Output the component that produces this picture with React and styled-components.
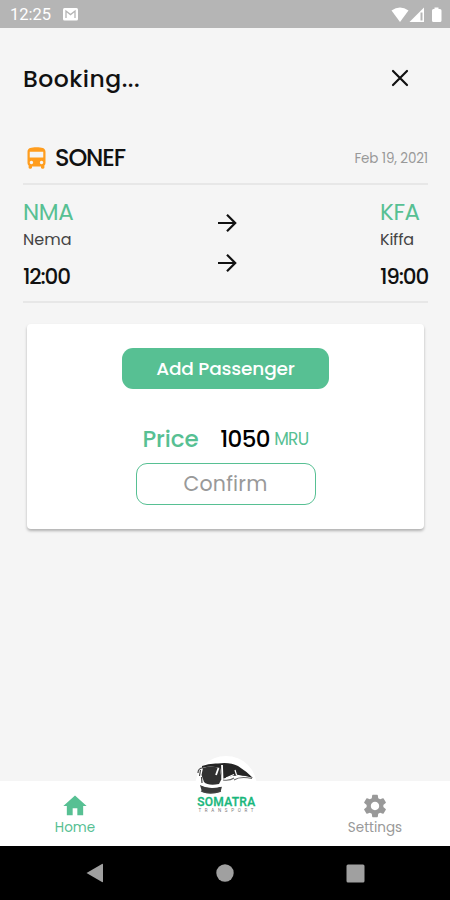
import React from 'react';
import styled, { createGlobalStyle } from 'styled-components';
import { MdDirectionsBus, MdHome, MdSettings } from 'react-icons/md';

const GlobalStyle = createGlobalStyle`
    * {
        box-sizing: border-box;
    }
    body {
        margin: 0;
        background: #f5f5f5;
        font-family: Poppins, Inter, "Open Sans", sans-serif;
    }
`;

const ArrowIcon = () => (
    <svg width="20" height="20" viewBox="0 0 20 20" fill="none" stroke="#111" strokeWidth="2.2">
        <path d="M1 10H18M10 1.8L18.2 10L10 18.2" />
    </svg>
);

const CloseIcon = () => (
    <svg width="18" height="18" viewBox="0 0 18 18" fill="none" stroke="#111" strokeWidth="2.2" strokeLinecap="round">
        <path d="M2 2L16 16M16 2L2 16" />
    </svg>
);

const MailIcon = () => (
    <svg width="15" height="13" viewBox="0 0 15 13">
        <rect width="15" height="12.5" rx="1.5" fill="#fff" />
        <path d="M3 10V3L7.5 6.6L12 3V10" fill="none" stroke="#b5b5b5" strokeWidth="1.3" />
    </svg>
);

const SignalIcons = () => (
    <svg width="52" height="16" viewBox="0 0 52 16" fill="#fff">
        <path d="M0.5 3.5Q9 -2.5 17.5 3.5L9 15Z" />
        <path d="M33 0.5V15H18.5Z" />
        <path d="M30.5 5.5V13.5" stroke="#b5b5b5" strokeWidth="2" />
        <path d="M43.5 0.5H47.5V2H49Q50.5 2 50.5 3.5V13.5Q50.5 15 49 15H42.5Q41 15 41 13.5V3.5Q41 2 42.5 2H43.5Z" />
    </svg>
);

const BusLogo = () => (
    <svg width="60" height="35" viewBox="0 0 60 35">
        {/* roof and side */}
        <path d="M6 6Q13 3 22 3.5Q34 2 42 6Q50 11 57 18Q46 14.5 36 16L26 19L24 8Q14 5 6 8Z" fill="#252525" />
        {/* windscreen */}
        <path d="M7 8Q14 5 24 8L25.5 19L23 24Q12 26 8 22L5.5 15Z" fill="#303030" />
        {/* bumper */}
        <path d="M4 25Q13 30 26 26.5L24.5 32Q14 35 6 32Z" fill="#3a3a3a" />
        <path d="M4 23.5Q13 28.5 26 25.5L29 21M26 5L26.5 19M22.500 8L20 15" fill="none" stroke="#fff" strokeWidth="1.8" />
        <path d="M7 8Q2 8 2 13M4.500 10L3.500 16M5.500 17L6 23M5 31Q14 35 25 31" fill="none" stroke="#444" strokeWidth="1.2" />
        <path d="M27 20Q34 21 38 18M38 20Q44 16 56 18.500" fill="none" stroke="#666" strokeWidth="1.1" />
        <path d="M30 18L38 14.500M39 10L40.500 15L46 16.500" fill="none" stroke="#fff" strokeWidth="1.2" />
    </svg>
);

function Stop({ code, city, time, citySpacing }) {
    return (
        <StopStyled>
            <Text size={23} color="#57c093" line={30} spacing={-0.4}>{code}</Text>
            <Text size={16} color="#444" line={26} spacing={citySpacing}>{city}</Text>
            <TimeText size={21.5} weight={500} line={30} spacing={-1.2}>{time}</TimeText>
        </StopStyled>
    );
}

function App() {
    return (
        <Screen>
            <GlobalStyle />
            <StatusBar>
                <Clock>12:25</Clock>
                <MailIcon />
                <StatusRight><SignalIcons /></StatusRight>
            </StatusBar>
            <Header>
                <Text size={23.5} weight={500} line={34} spacing={0.5}>Booking...</Text>
                <CloseButton><CloseIcon /></CloseButton>
            </Header>
            <Trip>
                <TripHeader>
                    <Company>
                        <MdDirectionsBus size={27} color="#ff9d1e" />
                        <Text size={24} weight={500} line={34} spacing={-1.1}>SONEF</Text>
                    </Company>
                    <DateText size={13.5} color="#999" line={20} spacing={-0.15}>Feb 19, 2021</DateText>
                </TripHeader>
                <Route>
                    <Stop code="NMA" city="Nema" time="12:00" />
                    <Arrows>
                        <ArrowIcon />
                        <ArrowIcon />
                    </Arrows>
                    <Stop code="KFA" city="Kiffa" time="19:00" citySpacing={-0.2} />
                </Route>
            </Trip>
            <Card>
                <AddButton>Add Passenger</AddButton>
                <Price>
                    <Text size={23} weight={500} color="#57c093" line={34} spacing={-0.1}>Price</Text>
                    <Amount size={23} weight={500} color="#000" line={34} spacing={-0.6}>1050</Amount>
                    <Text size={17} color="#57c093" line={34} spacing={-0.7}>MRU</Text>
                </Price>
                <ConfirmButton>Confirm</ConfirmButton>
            </Card>
            <TabBar>
                <Tab color="#57c093">
                    <MdHome size={28} />
                    <TabLabel>Home</TabLabel>
                </Tab>
                <LogoSlot>
                    <Logo>
                        <BusLogo />
                        <Brand>SOMATRA</Brand>
                        <Tagline>TRANSPORT</Tagline>
                    </Logo>
                </LogoSlot>
                <Tab color="#999">
                    <MdSettings size={28} />
                    <TabLabel>Settings</TabLabel>
                </Tab>
            </TabBar>
            <SystemNav>
                <svg width="18" height="20" viewBox="0 0 18 20"><path d="M0.5 10L16 1Q17 0.5 17 1.5V18.5Q17 19.5 16 19Z" fill="#a0a0a0" /></svg>
                <svg width="18" height="18" viewBox="0 0 18 18"><circle cx="9" cy="9" r="8.7" fill="#a0a0a0" /></svg>
                <svg width="19" height="19" viewBox="0 0 19 19"><rect x="0.5" y="0.5" width="18" height="18" rx="1.5" fill="#a0a0a0" /></svg>
            </SystemNav>
        </Screen>
    );
}

const Screen = styled.div`
    width: 450px;
    height: 900px;
    display: flex;
    flex-direction: column;
    background: #f5f5f5;
    overflow: hidden;
    svg {
        display: block;
        flex-shrink: 0;
    }
`;

const Text = styled.span`
    display: block;
    white-space: nowrap;
    font-size: ${({ size }) => size}px;
    font-weight: ${({ weight }) => weight || 400};
    line-height: ${({ line }) => line}px;
    letter-spacing: ${({ spacing }) => spacing || 0}px;
    color: ${({ color }) => color || '#111'};
`;

const StatusBar = styled.div`
    height: 28px;
    padding: 1px 7px 0 10px;
    display: flex;
    align-items: center;
    background: #b5b5b5;
`;

const Clock = styled.span`
    width: 53px;
    font: 400 16.5px/28px Roboto, sans-serif;
    color: #fff;
`;

const StatusRight = styled.div`
    margin-left: auto;
`;

const Header = styled.div`
    height: 102px;
    padding: 0 41px 1px 23px;
    display: flex;
    align-items: center;
    justify-content: space-between;
`;

const CloseButton = styled.div`
    padding-bottom: 2px;
`;

const Trip = styled.div`
    margin: 0 22px 0 23px;
`;

const TripHeader = styled.div`
    height: 55px;
    display: flex;
    align-items: center;
    justify-content: space-between;
    border-bottom: 2px solid #e7e7e7;
    padding-top: 3px;
`;

const Company = styled.div`
    display: flex;
    align-items: center;
    gap: 5px;
`;

const DateText = styled(Text)`
    padding-top: 1px;
`;

const Route = styled.div`
    height: 118px;
    padding-top: 12px;
    display: flex;
    justify-content: space-between;
    border-bottom: 2px solid #e7e7e7;
`;

const StopStyled = styled.div`
    width: 48px;
`;

const TimeText = styled(Text)`
    margin-top: 9px;
`;

const Arrows = styled.div`
    display: flex;
    flex-direction: column;
    gap: 20px;
    padding: 16px 0 0 2px;
`;

const Card = styled.div`
    height: 205px;
    margin: 21px 26px 0 27px;
    padding-top: 24px;
    display: flex;
    flex-direction: column;
    align-items: center;
    background: #fff;
    border-radius: 4px;
    box-shadow: 0 2px 3px rgba(0, 0, 0, 0.28);
`;

const AddButton = styled.button`
    width: 207px;
    height: 41px;
    padding: 0;
    border: 0;
    border-radius: 11px;
    background: #57c093;
    color: #fff;
    font: 500 18.5px Poppins, Inter, sans-serif;
    letter-spacing: -0.15px;
`;

const Price = styled.div`
    width: 166px;
    margin-top: 33px;
    display: flex;
`;

const Amount = styled(Text)`
    width: 54px;
    margin-left: auto;
`;

const ConfirmButton = styled.button`
    width: 180px;
    height: 42px;
    margin-top: 7px;
    padding: 0 0 1px;
    border: 1px solid #57c093;
    border-radius: 11px;
    background: #fff;
    color: #999;
    font: 400 20.5px Poppins, Inter, sans-serif;
    letter-spacing: 0.2px;
`;

const TabBar = styled.div`
    height: 65px;
    margin-top: auto;
    display: flex;
    background: #fff;
`;

const Tab = styled.div`
    width: 150px;
    padding-top: 11px;
    display: flex;
    flex-direction: column;
    align-items: center;
    color: ${({ color }) => color};
`;

const TabLabel = styled.span`
    font-size: 13.5px;
    line-height: 16px;
`;

const LogoSlot = styled.div`
    width: 150px;
    padding-left: 2px;
    display: flex;
    justify-content: center;
    align-items: flex-start;
`;

const Logo = styled.div`
    width: 62px;
    height: 62px;
    margin-top: -25px;
    padding-top: 4px;
    display: flex;
    flex-direction: column;
    align-items: center;
    border-radius: 50%;
    background: #fff;
`;

const Brand = styled.span`
    margin-right: -0.7px;
    font: 500 12px/14px Roboto, sans-serif;
    letter-spacing: 0.3px;
    color: #19b77c;
    -webkit-text-stroke: 0.3px #19b77c;
`;

const Tagline = styled.span`
    font: 400 4.5px/4px Roboto, sans-serif;
    letter-spacing: 3.7px;
    margin-right: -3.7px;
    color: #777;
`;

const SystemNav = styled.div`
    height: 54px;
    padding: 0 85px 0 86px;
    display: flex;
    align-items: center;
    justify-content: space-between;
    background: #000;
`;

export default App;
